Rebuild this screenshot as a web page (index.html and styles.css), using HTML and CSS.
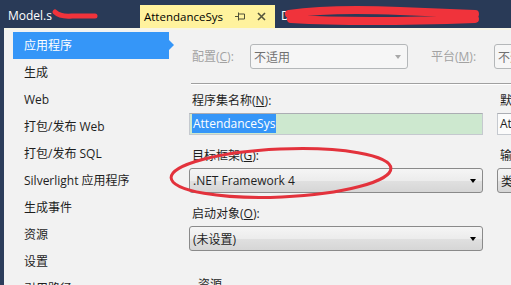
FILE: index.html
```html
<html>
<head>
<title>AttendanceSys</title>
<link rel="stylesheet" href="styles.css">
</head>
<body>
<div class="tabbar">
  <div class="tab first">Model.s</div>
  <div class="tab active">
    <span class="tabname">AttendanceSys</span>
    <svg class="pin" width="10" height="9" viewBox="0 0 10 9"><path d="M0 4.5H3.5M3.5 0.5V8.5M4 2H9.5V7H4" fill="none" stroke="#4f4f36" stroke-width="1"/></svg>
    <svg class="close" width="9" height="9" viewBox="0 0 9 9"><path d="M1 1L8 8M8 1L1 8" stroke="#55553c" stroke-width="1.6"/></svg>
  </div>
  <div class="tab">D</div>
</div>
<div class="main">
  <div class="frame"></div>
  <div class="area">
    <div class="nav">
      <div class="item sel">应用程序</div>
      <div class="item">生成</div>
      <div class="item">Web</div>
      <div class="item">打包/发布 Web</div>
      <div class="item">打包/发布 SQL</div>
      <div class="item">Silverlight 应用程序</div>
      <div class="item">生成事件</div>
      <div class="item">资源</div>
      <div class="item">设置</div>
      <div class="item">引用路径</div>
    </div>
    <div class="page">
      <div class="cfgrow">
        <span class="lbl dim cfglbl">配置(<u>C</u>):</span>
        <div class="combo dis cfgbox"><span>不适用</span><i class="arr"></i></div>
        <span class="lbl dim platlbl">平台(<u>M</u>):</span>
        <div class="combo dis platbox"><span>不适用</span><i class="arr"></i></div>
      </div>
      <div class="sep"></div>
      <div class="grid">
        <div class="field">
          <div class="lbl">程序集名称(<u>N</u>):</div>
          <div class="textbox green"><span class="hl">AttendanceSys</span></div>
        </div>
        <div class="field">
          <div class="lbl">默认命名空间(<u>L</u>):</div>
          <div class="textbox">AttendanceSys</div>
        </div>
        <div class="field">
          <div class="lbl">目标框架(<u>G</u>):</div>
          <div class="combo"><span>.NET Framework 4</span><i class="arr"></i></div>
        </div>
        <div class="field">
          <div class="lbl">输出类型(<u>U</u>):</div>
          <div class="combo"><span>类库</span><i class="arr"></i></div>
        </div>
        <div class="field">
          <div class="lbl">启动对象(<u>O</u>):</div>
          <div class="combo"><span>(未设置)</span><i class="arr"></i></div>
        </div>
      </div>
      <div class="group">资源</div>
    </div>
  </div>
</div>
<svg class="marks" width="511" height="285" viewBox="0 0 511 285">
  <path d="M55 12 Q60 17 72 16 L95 16" fill="none" stroke="#f0333b" stroke-width="5" stroke-linecap="round"/>
  <path d="M289 14 Q330 8 400 11 L475 14 M291 19 Q360 23 475 19" fill="none" stroke="#f0333b" stroke-width="8" stroke-linecap="round"/>
  <ellipse cx="281" cy="173" rx="110" ry="24" transform="rotate(-2.5 281 173)" fill="none" stroke="#e3323c" stroke-width="3"/>
</svg>
</body>
</html>
```

FILE: styles.css
```css
body { margin:0; width:511px; height:285px; overflow:hidden; position:relative;
  background:#2c3d5b; color:#1e1e1e;
  font-family:"Open Sans", "Noto Sans CJK SC", sans-serif; font-size:12px; }
u { text-decoration:underline; }

.tabbar { height:28px; display:flex; align-items:flex-end; background:#293a57; }
.tab { color:#fff; height:23px; line-height:21px; padding:0 6px; box-sizing:border-box; }
.tab.first { width:140px; padding-left:8px; }
.tab.active { width:135px; background:#fff29d; color:#000; display:flex; align-items:center; padding:0 0 0 4px; }
.tabname { flex:1; min-width:0; font-size:11.5px; }
.pin { flex:none; margin-right:12px; }
.close { flex:none; margin-right:9px; }

.main { display:flex; height:257px; }
.frame { width:4px; background:#2c3d5b; }
.area { flex:1; display:flex; background:#f2f2f2; border-top:2px solid #f7f5e8; overflow:hidden; }

.nav { width:170px; flex:none; padding-top:2px; }
.item { height:27px; line-height:27px; margin-left:9px; width:156px; padding-left:11px; box-sizing:border-box; white-space:nowrap; position:relative; }
.item.sel { background:#3596f8; color:#fff; }
.item.sel::after { content:""; position:absolute; right:-5px; top:8px; border-left:5px solid #3596f8; border-top:5px solid transparent; border-bottom:5px solid transparent; }

.page { flex:1; padding-left:15px; overflow:hidden; }
.lbl { line-height:16px; padding-left:3px; white-space:nowrap; }
.lbl.dim { color:#a2a2a2; }

.cfgrow { display:flex; align-items:center; margin-top:14px; height:25px; white-space:nowrap; }
.cfglbl { width:58px; flex:none; }
.cfgbox { width:158px; flex:none; }
.platlbl { margin-left:20px; width:63px; flex:none; }
.platbox { width:120px; flex:none; }

.combo { height:25px; box-sizing:border-box; border:1px solid #8a8a8a; border-radius:3px;
  background:linear-gradient(#f5f5f5, #ececec 50%, #e0e0e0 52%, #d6d6d6);
  display:flex; align-items:center; justify-content:space-between; padding:0 6px 0 3px; white-space:nowrap; }
.combo.dis { background:#f6f6f6; border-color:#b4b7b9; color:#707070; }
.arr { width:0; height:0; border-top:4px solid #000; border-left:3.5px solid transparent; border-right:3.5px solid transparent; margin-top:1px; }
.combo.dis .arr { border-top-color:#a8a8a8; }

.sep { margin:14px 0 8px 2px; height:1px; background:#a0a0a0; border-bottom:1px solid #fff; }

.grid { display:grid; grid-template-columns:294px 200px; column-gap:14px; row-gap:13px; }
.field .lbl { margin-bottom:4px; }
.textbox { height:22px; box-sizing:border-box; border:1px solid #c5c9cf; border-top-color:#abadb3; background:#fbfbfb; line-height:20px; padding-left:2px; white-space:nowrap; }
.textbox.green { background:#cde8cf; }
.hl { background:#3596f8; color:#fff; padding:1px 1px; }

.group { margin:26px 0 0 9px; line-height:16px; }

.marks { position:absolute; left:0; top:0; pointer-events:none; }
```
